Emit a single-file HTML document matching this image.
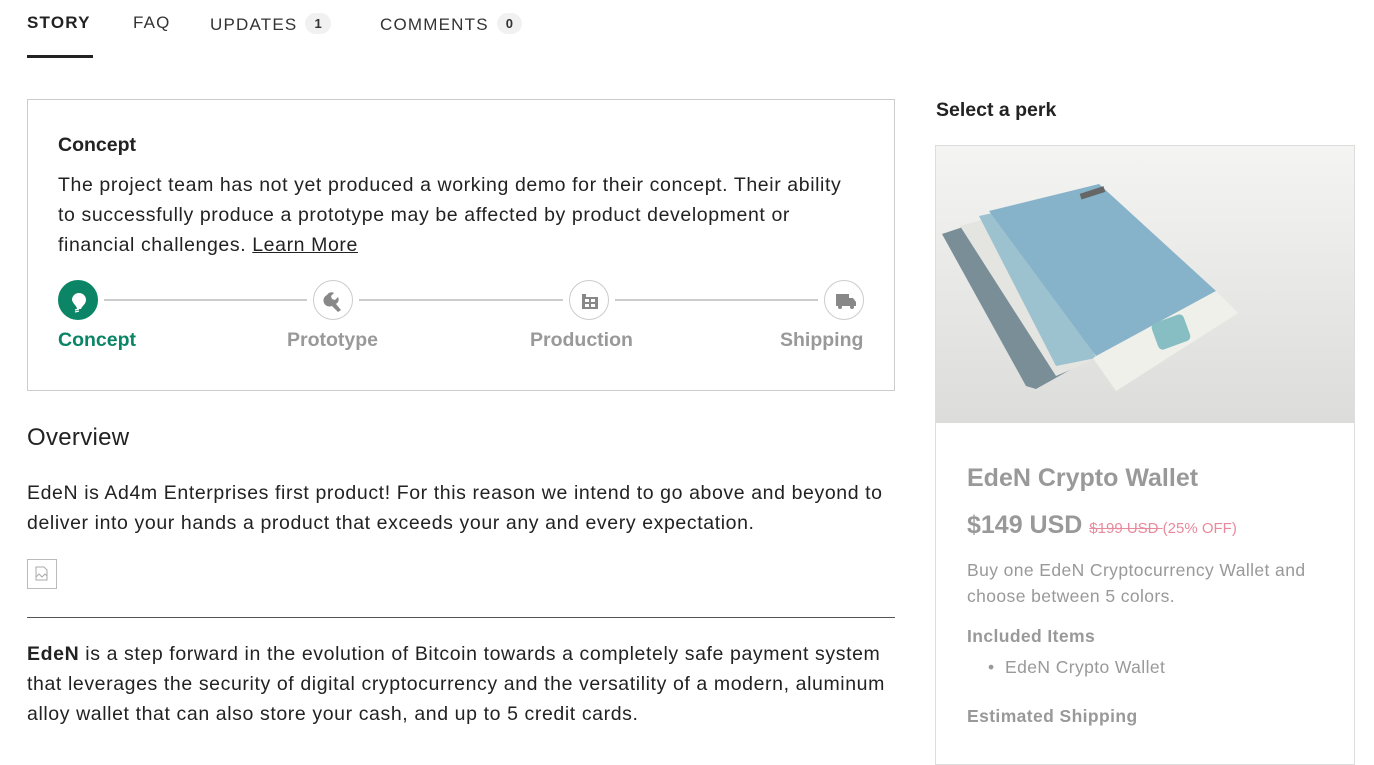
<!DOCTYPE html>
<html><head><meta charset="utf-8"><style>
*{margin:0;padding:0;box-sizing:border-box}
body{width:1374px;height:739px;overflow:hidden;background:#fff;font-family:"Liberation Sans",sans-serif;color:#222;position:relative}
.a{position:absolute;white-space:nowrap}
.tab{font-size:17px;letter-spacing:1.2px;top:13px;color:#333}
.badge{display:inline-block;background:#f1f1f1;border-radius:12px;font-size:13px;font-weight:bold;padding:3px 9px;margin-left:8px;vertical-align:2px;letter-spacing:0}
.p{font-size:19.5px;line-height:30px;color:#222;letter-spacing:0.6px}
.circ{position:absolute;width:40px;height:40px;border-radius:50%;border:1px solid #ccc;background:#fff;top:280px}
.line{position:absolute;height:2px;background:#ccc;top:299px}
.lbl{font-size:19.5px;color:#999;top:329px;font-weight:bold}
.g{letter-spacing:0.4px}
</style></head><body>
<div class="a tab" style="left:27px;font-weight:bold;color:#222">STORY</div>
<div style="position:absolute;left:27px;top:55px;width:66px;height:3px;background:#222"></div>
<div class="a tab" style="left:133px">FAQ</div>
<div class="a tab" style="left:210px">UPDATES<span class="badge">1</span></div>
<div class="a tab" style="left:380px">COMMENTS<span class="badge">0</span></div>

<div style="position:absolute;left:27px;top:99px;width:868px;height:292px;border:1px solid #ccc"></div>
<div class="a" style="left:58px;top:134px;font-size:19.5px;font-weight:bold">Concept</div>
<div class="a p" style="left:58px;top:170px">The project team has not yet produced a working demo for their concept. Their ability<br>to successfully produce a prototype may be affected by product development or<br>financial challenges. <u>Learn More</u></div>
<div class="line" style="left:104px;width:203px"></div>
<div class="line" style="left:359px;width:204px"></div>
<div class="line" style="left:615px;width:203px"></div>
<div class="circ" style="left:58px;background:#0b8566;border-color:#0b8566">
<svg width="40" height="40" viewBox="0 0 40 40"><path d="M20 12a7 7 0 0 1 7 7c0 4-4 6-5 9h-4c0-3-4-5-5-9a7 7 0 0 1 7-7z" fill="#fff"/><path d="M16 29l4-1M16 31l4-1" stroke="#fff" stroke-width="1.2"/></svg></div>
<div class="circ" style="left:313px"><svg width="40" height="40" viewBox="0 0 40 40"><path d="M13 14a5 5 0 0 1 7-2l-3 3 1 3 3 1 3-3a5 5 0 0 1-2 7l5 6-3 2-6-6a5 5 0 0 1-5-11z" fill="#888"/></svg></div>
<div class="circ" style="left:569px"><svg width="40" height="40" viewBox="0 0 40 40"><path d="M12 13h4v3h12v12H12z" fill="#888"/><rect x="15" y="18" width="4" height="3" fill="#fff"/><rect x="21" y="18" width="4" height="3" fill="#fff"/><rect x="15" y="23" width="4" height="3" fill="#fff"/><rect x="21" y="23" width="4" height="3" fill="#fff"/></svg></div>
<div class="circ" style="left:824px"><svg width="40" height="40" viewBox="0 0 40 40"><path d="M11 13h13v12H11zM24 17h4l3 4v4h-7z" fill="#888"/><circle cx="15" cy="26" r="2" fill="#888"/><circle cx="27" cy="26" r="2" fill="#888"/></svg></div>
<div class="a lbl" style="left:58px;color:#0b8566">Concept</div>
<div class="a lbl" style="left:287px">Prototype</div>
<div class="a lbl" style="left:530px">Production</div>
<div class="a lbl" style="left:780px">Shipping</div>

<div class="a" style="left:27px;top:424px;font-size:24px;color:#222;letter-spacing:0.3px">Overview</div>
<div class="a p" style="left:27px;top:478px">EdeN is Ad4m Enterprises first product! For this reason we intend to go above and beyond to<br>deliver into your hands a product that exceeds your any and every expectation.</div>
<div style="position:absolute;left:27px;top:559px;width:30px;height:30px;border:1px solid #bbb"><svg width="28" height="28" viewBox="0 0 28 28"><path d="M8 7h8l3 3v10H8z" fill="none" stroke="#aaa"/><path d="M8 17l3-3 3 3 3-3 2 2" fill="none" stroke="#aaa"/></svg></div>
<div style="position:absolute;left:27px;top:617px;width:868px;height:1px;background:#555"></div>
<div class="a p" style="left:27px;top:639px"><b>EdeN</b> is a step forward in the evolution of Bitcoin towards a completely safe payment system<br>that leverages the security of digital cryptocurrency and the versatility of a modern, aluminum<br>alloy wallet that can also store your cash, and up to 5 credit cards.</div>

<div class="a" style="left:936px;top:99px;font-size:19.5px;font-weight:bold">Select a perk</div>
<div style="position:absolute;left:935px;top:145px;width:420px;height:620px;border:1px solid #ddd"></div>
<svg style="position:absolute;left:936px;top:146px" width="418" height="277" viewBox="0 0 418 277">
<defs><linearGradient id="bg" x1="0" y1="0" x2="0" y2="1"><stop offset="0" stop-color="#f4f4f2"/><stop offset="1" stop-color="#dcdcda"/></linearGradient></defs>
<rect width="418" height="277" fill="url(#bg)"/>
<polygon points="6,88 60,70 150,215 100,243 90,240" fill="#7a8e98"/>
<polygon points="24,80 60,70 155,215 120,230" fill="#e4e4e0"/>
<polygon points="43,70 90,60 160,212 120,220" fill="#9cc2cf"/>
<polygon points="53,65 163,38 280,145 160,210" fill="#86b3ca"/>
<polygon points="157,212 280,145 302,167 180,245" fill="#f0f0ea"/>
<rect x="218" y="172" width="34" height="28" rx="5" fill="#86bec4" transform="rotate(-20 235 186)"/>
<rect x="144" y="44" width="25" height="6" fill="#666" transform="rotate(-18 156 47)"/>
</svg>
<div class="a" style="left:967px;top:464px;font-size:25px;font-weight:bold;color:#999">EdeN Crypto Wallet</div>
<div class="a" style="left:967px;top:511px;font-size:25px;font-weight:bold;color:#999">$149 USD <span style="font-size:15px;font-weight:normal;color:#e88a9c"><s>$199 USD </s>(25% OFF)</span></div>
<div class="a g" style="left:967px;top:557px;font-size:17.5px;line-height:26px;color:#999">Buy one EdeN Cryptocurrency Wallet and<br>choose between 5 colors.</div>
<div class="a g" style="left:967px;top:626px;font-size:17.5px;font-weight:bold;color:#999">Included Items</div>
<div class="a g" style="left:988px;top:657px;font-size:17.5px;color:#999">• &nbsp;EdeN Crypto Wallet</div>
<div class="a g" style="left:967px;top:706px;font-size:17.5px;font-weight:bold;color:#999">Estimated Shipping</div>
</body></html>
